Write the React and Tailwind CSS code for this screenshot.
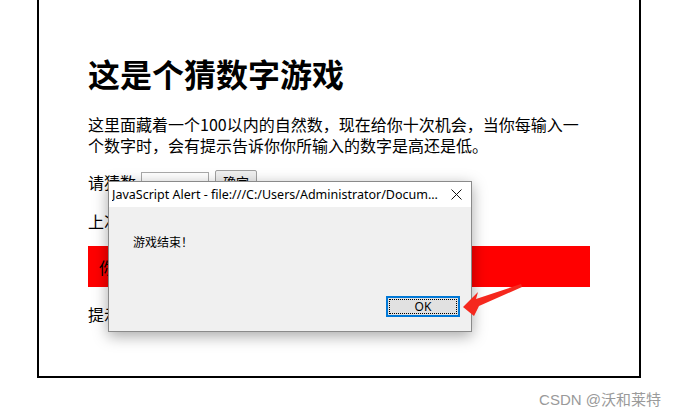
export default function App() {
  const cjk = { fontFamily: '"Microsoft YaHei", "Noto Sans CJK SC", sans-serif' }
  const ui = { fontFamily: '"Segoe UI", "Noto Sans", "Noto Sans CJK SC", sans-serif' }

  return (
    <div className="relative w-[676px] h-[418px] bg-white overflow-hidden text-black" style={cjk}>
      <div className="ml-[37px] w-[604px] h-[378px] border-2 border-t-0 border-black px-[49px] pt-[52px]">
        <h1 className="text-[32px] font-bold leading-[42px]">这是个猜数字游戏</h1>
        <p className="mt-[20px] text-[16px] leading-[21px]">
          这里面藏着一个100以内的自然数，现在给你十次机会，当你每输入一个数字时，会有提示告诉你你所输入的数字是高还是低。
        </p>
        <div className="mt-[14px] flex items-start h-[24px] text-[16px]">
          <span className="leading-[24px] w-[48px]">请猜数</span>
          <input className="ml-[5px] mt-[2px] w-[68px] h-[22px] border border-[#a9a9a9] bg-white" />
          <button className="ml-[6px] w-[42px] h-[24px] border border-[#a0a0a0] bg-[#efefef] text-[13px] rounded-[2px]">确定</button>
        </div>
        <p className="mt-[17px] text-[16px] leading-[21px]">上次猜的数是：</p>
        <div className="mt-[14px] h-[41px] bg-[#ff0000] flex items-center pl-[11px] text-[16px]">你猜错了！</div>
        <p className="mt-[17px] text-[16px] leading-[21px]">提示：</p>
      </div>
      <div className="flex justify-end pr-[15px] mt-[12px]">
        <span className="text-[15px] leading-[20px] text-[#9a9a9a]" style={{ fontFamily: '"Liberation Sans", "Noto Sans CJK SC", sans-serif' }}>
          CSDN @沃和莱特
        </span>
      </div>

      {/* alert dialog */}
      <div className="absolute left-[108px] top-[181px] w-[364px] h-[151px] border border-[#8a8a8a] bg-[#f0f0f0] shadow-[0_4px_14px_rgba(0,0,0,0.35)] flex flex-col" style={ui}>
        <div className="h-[25px] bg-white flex items-center pl-[3px] pr-[9px]">
          <span className="flex-1 text-[12.5px] leading-[16px] whitespace-nowrap overflow-hidden">
            JavaScript Alert - file:///C:/Users/Administrator/Docum...
          </span>
          <svg width="11" height="11" viewBox="0 0 11 11" className="ml-[12px]">
            <path d="M0.5 0.5L10.5 10.5M10.5 0.5L0.5 10.5" stroke="#111" strokeWidth="1" />
          </svg>
        </div>
        <div className="flex-1 relative">
          <div className="pl-[24px] pt-[26px] text-[12px] leading-[18px]" style={cjk}>游戏结束！</div>
          <div className="absolute left-[277px] top-[89px] w-[74px] h-[21px] border-2 border-[#0078d7] bg-[#e1e1e1] p-[1px]">
            <div className="w-full h-full border border-dotted border-black flex items-center justify-center text-[12px] leading-[14px]">
              OK
            </div>
          </div>
        </div>
      </div>

      {/* red annotation arrow */}
      <svg className="absolute left-0 top-0" width="676" height="418" viewBox="0 0 676 418">
        <polygon
          points="463,307 478,292 476,299 521,284 522,287 479,306 474,316"
          fill="#f5281e"
        />
      </svg>
    </div>
  )
}
